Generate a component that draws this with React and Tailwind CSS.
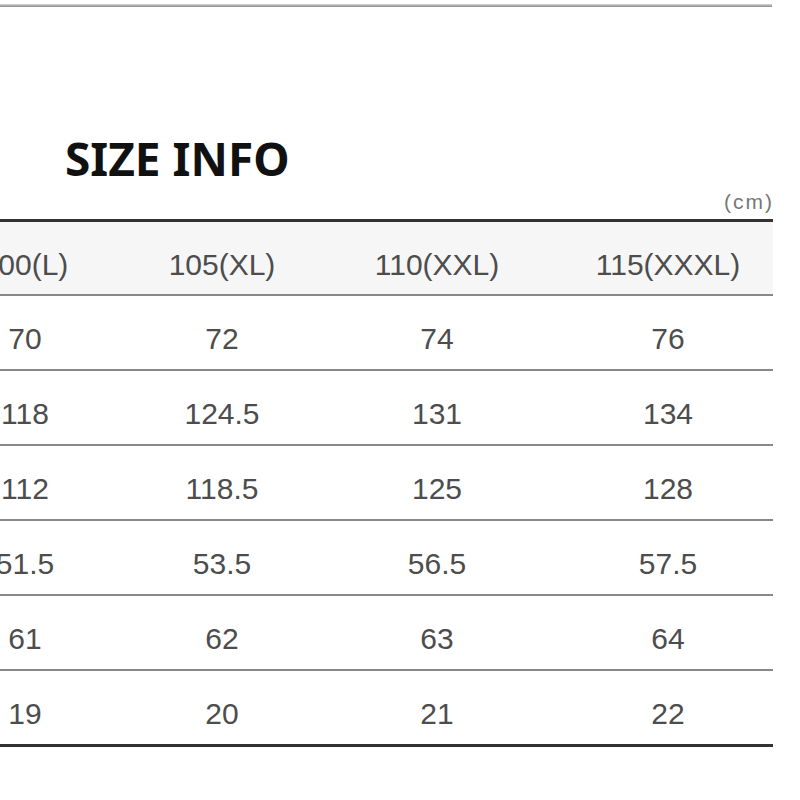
import React from "react";

const header = ["100(L)", "105(XL)", "110(XXL)", "115(XXXL)"];
const rows = [
  ["70", "72", "74", "76"],
  ["118", "124.5", "131", "134"],
  ["112", "118.5", "125", "128"],
  ["51.5", "53.5", "56.5", "57.5"],
  ["61", "62", "63", "64"],
  ["19", "20", "21", "22"],
];

function Cells({ values }) {
  return (
    <>
      <div className="w-[200px] shrink-0 text-center">{values[0]}</div>
      <div className="w-[194px] shrink-0 text-center">{values[1]}</div>
      <div className="w-[236px] shrink-0 text-center">{values[2]}</div>
      <div className="w-[218px] shrink-0 pl-[8px] text-center">{values[3]}</div>
    </>
  );
}

export default function App() {
  return (
    <div className="w-[800px] h-[800px] bg-white overflow-hidden font-['Liberation_Sans',Arial,sans-serif]">
      <div className="mt-[4px] h-[3px] w-[772px] bg-gradient-to-b from-[#d8d8d8] to-[#8a8a8a]" />
      <div className="mt-[128px] pl-[65px] text-[46px] leading-none font-bold text-[#111] font-['Noto_Sans',sans-serif]">
        SIZE INFO
      </div>
      <div className="mt-[10px] w-[774px] text-right text-[21px] tracking-[2px] leading-none text-[#777]">(cm)</div>
      <div className="mt-[7px] ml-[-75px] w-[848px] text-[30px] text-[#4d4d4d]">
        <div className="flex items-center h-[77px] pt-[12px] bg-[#f6f6f6] border-t-[3px] border-b-2 border-t-[#333] border-b-[#888]">
          <Cells values={header} />
        </div>
        {rows.map((r, i) => (
          <div
            key={i}
            className={
              i === rows.length - 1
                ? "flex items-center h-[76px] pt-[12px] border-b-[3px] border-[#333]"
                : "flex items-center h-[75px] pt-[12px] border-b-2 border-[#888]"
            }
          >
            <Cells values={r} />
          </div>
        ))}
      </div>
    </div>
  );
}
